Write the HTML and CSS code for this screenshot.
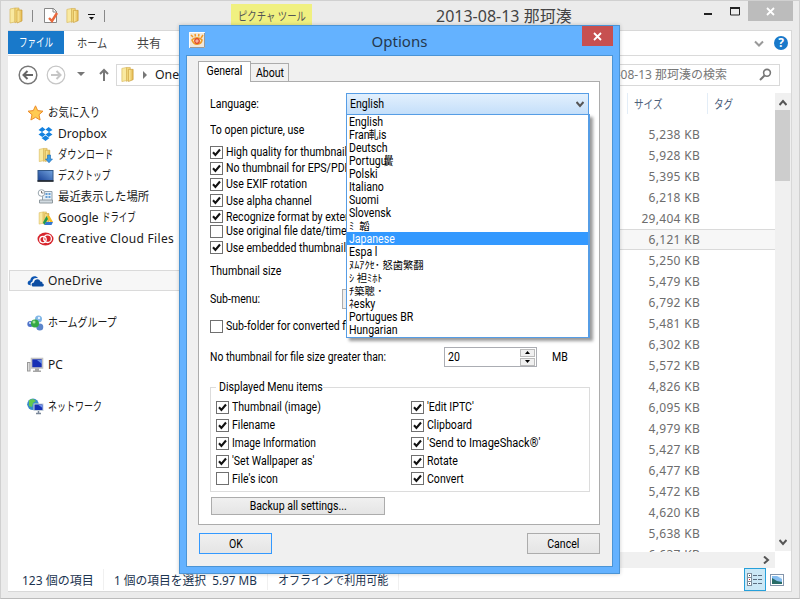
FILE: index.html
```html
<!DOCTYPE html>
<html lang="ja">
<head>
<meta charset="utf-8">
<title>Options</title>
<link rel="stylesheet" href="styles.css">
</head>
<body>
<svg width="0" height="0" class="defs">
  <defs>
    <linearGradient id="gold" x1="0" x2="1"><stop offset="0" stop-color="#fff0a8"/><stop offset="1" stop-color="#e2b64c"/></linearGradient>
    <linearGradient id="screen" x1="0" y1="1" x2="1" y2="0"><stop offset="0" stop-color="#163f94"/><stop offset="1" stop-color="#75a5df"/></linearGradient>
    <symbol id="folder" viewBox="0 0 16 17"><path d="M2 2l5-1v14l-5 1z" fill="#f9e9a0" stroke="#d9b95b" stroke-width=".7"/><path d="M7 1h4v12l-4 3z" fill="#f4da7d" stroke="#d0a849" stroke-width=".6"/><path d="M9 3h5v11l-5 2z" fill="url(#gold)" stroke="#c89c36" stroke-width=".7"/></symbol>
    <symbol id="check" viewBox="0 0 13 13"><rect x=".5" y=".5" width="12" height="12" fill="#fff" stroke="#707070"/><path d="M3 6.300l2.400 2.600L10 3.500" fill="none" stroke="#111" stroke-width="2.100"/></symbol>
    <symbol id="uncheck" viewBox="0 0 13 13"><rect x=".5" y=".5" width="12" height="12" fill="#fff" stroke="#707070"/></symbol>
  </defs>
</svg>
<div class="window">
  <header class="titlebar">
    <div class="quick">
      <svg width="16" height="17"><use href="#folder"/></svg><i></i>
      <svg class="doc" width="16" height="17" viewBox="0 0 16 17"><path d="M1.500 1.500h9l3 3v11h-12z" fill="#fff" stroke="#888"/><path d="M10 1.500v3.500h4" fill="none" stroke="#888"/><path d="M6 11l3 3 5-8" fill="none" stroke="#e9683c" stroke-width="2.400"/></svg>
      <svg class="fold2" width="15" height="17"><use href="#folder"/></svg>
      <svg class="qdrop" width="8" height="7" viewBox="0 0 8 7"><path d="M0 .5h7" stroke="#111"/><path d="M1 3h5L3.500 6z" fill="#111"/></svg><i></i>
    </div>
    <div class="tooltab"><span>ピクチャ ツール</span></div>
    <div class="wintitle">2013-08-13 那珂湊</div>
    <div class="winbtns">
      <svg width="8" height="3"><path d="M0 1h8" stroke="#222" stroke-width="2"/></svg>
      <svg class="max" width="10" height="9"><path d="M.5 1.500h9v6.500h-9z" fill="none" stroke="#222"/><path d="M0 1h10" stroke="#222" stroke-width="2"/></svg>
      <div class="close"><svg width="9" height="9" viewBox="0 0 9 9"><path d="M1 1l7 7M8 1l-7 7" stroke="#fff" stroke-width="1.800"/></svg></div>
    </div>
  </header>
  <main class="client">
    <nav class="ribbon">
      <div class="file"><span>ファイル</span></div><div class="rtab home"><span>ホーム</span></div><div class="rtab">共有</div>
      <svg class="chev" width="10" height="7" viewBox="0 0 10 7"><path d="M1 1.500l4 4 4-4" fill="none" stroke="#999" stroke-width="2"/></svg>
      <div class="help">?</div>
    </nav>
    <div class="address">
      <svg width="20" height="20" viewBox="0 0 20 20"><circle cx="10" cy="10" r="8.800" fill="none" stroke="#777" stroke-width="1.500"/><path d="M15 10H6M9.500 6L5.500 10l4 4" fill="none" stroke="#666" stroke-width="2"/></svg>
      <svg class="fwd" width="20" height="20" viewBox="0 0 20 20"><circle cx="10" cy="10" r="8.800" fill="none" stroke="#c6c6c6" stroke-width="1.200"/><path d="M5 10h9M10.500 6l4 4-4 4" fill="none" stroke="#c6c6c6" stroke-width="2"/></svg>
      <svg class="hist" width="8" height="5"><path d="M0 0h8L4 4z" fill="#777"/></svg>
      <svg class="up" width="10" height="13" viewBox="0 0 10 13"><path d="M5 13V2M1 6l4-4 4 4" fill="none" stroke="#777" stroke-width="2"/></svg>
      <div class="path"><svg width="15" height="17"><use href="#folder"/></svg><svg class="tri" width="5" height="8"><path d="M0 0l4 4-4 4z" fill="#777"/></svg><span>OneDrive</span></div>
      <div class="search"><span>2013-08-13 那珂湊の検索</span><svg width="13" height="13" viewBox="0 0 13 13"><circle cx="8" cy="4.800" r="3.400" fill="none" stroke="#777" stroke-width="1.600"/><path d="M5.500 7.500L1 12" stroke="#777" stroke-width="2"/></svg></div>
    </div>
    <div class="body">
      <aside class="side">
        <div class="it"><svg width="16" height="16" viewBox="0 0 16 16"><path d="M8 .8l2.200 4.800 5.300.6-4 3.500 1.100 5.300L8 12.300 3.400 15l1.100-5.300-4-3.500 5.300-.6z" fill="#ffcb52" stroke="#ec8c2a"/></svg><span class="w-fav">お気に入り</span></div>
        <div class="it sub"><svg width="16" height="16" viewBox="0 0 16 16"><path d="M1 4l3.800-3L8 3.500 4.500 6zM8 3.500L11.200 1 15 4l-3.500 2zM1 8.500L4.500 6 8 8.500 4.800 11zM8 8.500L11.500 6 15 8.500 11.200 11zM4 12l1-.4L8 9.500l3 2.100 1 .4-4 3z" fill="#1482e0"/></svg><span>Dropbox</span></div>
        <div class="it sub"><svg width="16" height="16" viewBox="0 0 16 16"><use href="#folder" width="14" height="16"/><path d="M10 8h3v4h2l-3.500 3.800L8 12h2z" fill="#3b9ae6" stroke="#1b6bb5" stroke-width=".6"/></svg><span class="w-dl">ダウンロード</span></div>
        <div class="it sub"><svg width="16" height="16" viewBox="0 0 16 16"><rect x=".5" y="2.500" width="15" height="10.500" fill="url(#screen)" stroke="#315787"/><path d="M0 13h16" stroke="#222" stroke-width="1.500"/></svg><span class="w-desk">デスクトップ</span></div>
        <div class="it sub"><svg width="16" height="16" viewBox="0 0 16 16"><path d="M5 2.500h9.500v10H5z" fill="#e6eff5" stroke="#91a1ad"/><path d="M8 5h2m1 0h2M8 8h2m1 0h2" stroke="#3983c9" stroke-width="1.500"/><path d="M2 11h13v3H2z" fill="#d2dbe1" stroke="#8f999f"/><circle cx="4" cy="4" r="3.300" fill="#fff" stroke="#9aa6ae"/><path d="M4 2v2h2" fill="none" stroke="#777"/></svg><span class="w-rec">最近表示した場所</span></div>
        <div class="it sub"><svg width="16" height="16" viewBox="0 0 16 16"><use href="#folder" width="13" height="16"/><path d="M9 6h3l3.500 6h-3z" fill="#f4be29"/><path d="M9 6l1.500 3L7 15l-1.500-2.500z" fill="#20994b"/><path d="M8.500 12h7L14 15H7z" fill="#3276d2"/></svg><span class="g">Google <span class="w-drive">ドライブ</span></span></div>
        <div class="it sub"><svg width="17" height="14" viewBox="0 0 17 14"><ellipse cx="8.500" cy="7" rx="8" ry="6.500" fill="#d7242c"/><circle cx="6" cy="7.600" r="3.200" fill="none" stroke="#fff" stroke-width="1.300"/><circle cx="10.600" cy="6.700" r="3.800" fill="none" stroke="#fff" stroke-width="1.300"/><path d="M6 7.500l3 2" stroke="#fff"/></svg><span class="cc">Creative Cloud Files</span></div>
        <div class="gap"></div>
        <div class="it active"><svg width="17" height="12" viewBox="0 0 17 12"><path d="M1 9.500C0 7 2 5.500 3.200 5.600 3.500 1 9 0 11 3.200 7 2.600 5.600 4.500 5.500 6.500 3.500 7 3 9 4 10.500z" fill="#0c55b2"/><path d="M5.500 11.500c-2-2-.4-4.200 1.500-4.100.3-3.600 5.400-4.400 6.300-1 2-.2 2.500 1.600 2 2.200C17.500 9 17 11 15.800 11.500z" fill="#0c4da2"/></svg><span>OneDrive</span></div>
        <div class="gap"></div>
        <div class="it"><svg width="17" height="16" viewBox="0 0 17 16"><circle cx="11.500" cy="4" r="3.500" fill="#80b6e7"/><circle cx="3.300" cy="9" r="3" fill="#4f73c9"/><circle cx="12.800" cy="12" r="3.500" fill="#5c85cb"/><circle cx="8" cy="8.500" r="4" fill="#35a944"/><circle cx="7" cy="7" r="1.500" fill="#a3e497"/><circle cx="12" cy="3" r="1.200" fill="#e4f3ff"/><circle cx="3" cy="8" r="1" fill="#d4e7ff"/></svg><span class="w-home">ホームグループ</span></div>
        <div class="gap"></div>
        <div class="it"><svg width="17" height="16" viewBox="0 0 17 16"><rect x=".5" y="5.500" width="2.500" height="8.500" fill="#ddd" stroke="#999"/><rect x="4.500" y="1.500" width="11" height="9.500" fill="#1730b5" stroke="#c3c3c3" stroke-width="1.600"/><path d="M10 3h5v4z" fill="#668ce5"/><path d="M8 11.500h4v2h2V15H6v-1.500h2z" fill="#a6a6a6"/></svg><span class="pc">PC</span></div>
        <div class="gap"></div>
        <div class="it"><svg width="17" height="17" viewBox="0 0 17 17"><circle cx="6" cy="6.300" r="5.800" fill="#388bc9"/><path d="M2 2l4-1 3 2-3 2-1 4-3-1zM8 5l3 1-2 5z" fill="#65c94d"/><rect x="7" y="6" width="9" height="6.500" fill="#1730b5" stroke="#c5d0dc"/><path d="M11.500 7h4v3z" fill="#7495ea"/><path d="M9 15.500h5M11.500 13v2" stroke="#7a8799" stroke-width="1.500"/></svg><span class="w-net">ネットワーク</span></div>
      </aside>
      <section class="files">
        <div class="head"><div class="c1"><span>サイズ</span></div><div class="c2"><span>タグ</span></div></div>
        <div class="rows">
          <p>5,238 KB</p><p>5,928 KB</p><p>5,395 KB</p><p>6,218 KB</p><p>29,404 KB</p><p class="sel">6,121 KB</p><p>5,250 KB</p><p>5,479 KB</p><p>6,792 KB</p><p>5,481 KB</p><p>6,302 KB</p><p>5,572 KB</p><p>4,826 KB</p><p>6,095 KB</p><p>4,979 KB</p><p>5,427 KB</p><p>6,477 KB</p><p>5,472 KB</p><p>4,620 KB</p><p>5,638 KB</p><p>6,637 KB</p>
        </div>
        <div class="hscroll"><svg width="7" height="8" viewBox="0 0 7 8"><path d="M1 .5L5 4 1 7.500" fill="none" stroke="#555" stroke-width="2"/></svg></div>
      </section>
      <div class="vscroll"><svg width="8" height="7" viewBox="0 0 8 7"><path d="M.5 6L4 2l3.500 4" fill="none" stroke="#555" stroke-width="2"/></svg><div class="thumb"></div><svg class="dn" width="8" height="7" viewBox="0 0 8 7"><path d="M.5 1L4 5l3.500-4" fill="none" stroke="#555" stroke-width="2"/></svg></div>
    </div>
    <footer class="status">
      <div class="s1"><span>123 個の項目</span></div><div class="s2"><span>1 個の項目を選択&nbsp; 5.97 MB</span></div><div class="s3"><span>オフラインで利用可能</span></div>
      <div class="view"><svg width="16" height="14" viewBox="0 0 16 14"><g fill="#fff" stroke="#7d8c9a"><rect x=".5" y=".5" width="4" height="4"/><rect x=".5" y="4.500" width="4" height="4"/><rect x=".5" y="8.500" width="4" height="4"/></g><path d="M2 2.500h1M2 10.500h1" stroke="#345"/><path d="M2 6.500h1" stroke="#c22"/><path d="M6 2.500h4m1 0h4M6 6.500h4m1 0h4M6 10.500h4m1 0h4" stroke="#5b6d80"/></svg></div>
      <svg class="pic" width="14" height="12" viewBox="0 0 14 12"><rect x=".5" y=".5" width="13" height="11" fill="#fff" stroke="#8495ab"/><path d="M2 2h10v8H2z" fill="#85bdf0"/><path d="M2 4l5 3 5 1v2H2z" fill="#276c67"/><path d="M7 2h5v3z" fill="#e5f4ff"/></svg>
    </footer>
  </main>
</div>

<div class="dialog">
  <div class="dtitle">
    <svg class="dicon" width="16" height="16" viewBox="0 0 16 16"><path d="M0 0h16v16H0z" fill="#f0e8dc"/><path d="M.5 15.500V.5h15" stroke="#fff" fill="none"/><path d="M1 15.500h14.500V1" stroke="#999" fill="none"/><path d="M3 8c2-3 8-3 10 0-1 5-8 6-10 0z" fill="#fff2c5" stroke="#f09b28" stroke-width="1.600"/><path d="M2 3l2 2M6 2l.5 2.500M10 2l-.5 2.500M14 3l-2 3" stroke="#f59a25" stroke-width="1.500"/><circle cx="8" cy="9" r="2.300" fill="#f6b09b" stroke="#df4328" stroke-width="1.200"/></svg>
    <h1>Options</h1>
    <div class="dclose"><svg width="9" height="9" viewBox="0 0 9 9"><path d="M1 1l7 7M8 1l-7 7" stroke="#fff" stroke-width="1.800"/></svg></div>
  </div>
  <div class="dbody">
    <div class="tabs"><div class="on"><span>General</span></div><div class="off"><span>About</span></div></div>
    <div class="panel">
      <div class="row lang"><div class="lang-label"><span>Language:</span></div>
        <div class="combo"><span>English</span><svg width="8" height="7" viewBox="0 0 8 7"><path d="M.5 1L4 5l3.500-4" fill="none" stroke="#555" stroke-width="2"/></svg>
          <ul class="list"><li><span>English</span></li><li><span>Fran<b class="k1">軋</b>is</span></li><li><span>Deutsch</span></li><li><span>Portugu<b class="k2">黌</b></span></li><li><span>Polski</span></li><li><span>Italiano</span></li><li><span>Suomi</span></li><li><span>Slovensk</span></li><li class="j">ﾐ&nbsp; 韜</li><li class="hot"><span>Japanese</span></li><li><span>Espa l</span></li><li class="j">ﾇﾑｱｸｾ･ 怒歯繁翻</li><li class="j">ｼ 袒ﾐﾎﾄ</li><li class="j">ﾁ築聰 ･</li><li><span><b>ﾈ</b>esky</span></li><li><span>Portugues BR</span></li><li><span>Hungarian</span></li></ul>
        </div>
      </div>
      <div class="row open"><span>To open picture, use</span></div>
      <div class="row h16"><svg><use href="#check"/></svg><span>High quality for thumbnails</span></div>
      <div class="row h16"><svg><use href="#check"/></svg><span>No thumbnail for EPS/PDF</span></div>
      <div class="row h16"><svg><use href="#check"/></svg><span>Use EXIF rotation</span></div>
      <div class="row h17"><svg><use href="#check"/></svg><span>Use alpha channel</span></div>
      <div class="row h15"><svg><use href="#check"/></svg><span>Recognize format by extension</span></div>
      <div class="row h14"><svg><use href="#uncheck"/></svg><span>Use original file date/time</span></div>
      <div class="row h19"><svg><use href="#check"/></svg><span>Use embedded thumbnail</span></div>
      <div class="row size"><span>Thumbnail size</span></div>
      <div class="row submenu"><div class="sub-label"><span>Sub-menu:</span></div><div class="hiddenbox"></div></div>
      <div class="row conv"><svg><use href="#uncheck"/></svg><span>Sub-folder for converted files</span></div>
      <div class="row limit"><div class="lbl"><span>No thumbnail for file size greater than:</span></div>
        <div class="spin"><span>20</span><div class="arrows"><i><svg width="5" height="3"><path d="M0 3h5L2.500 0z"/></svg></i><i><svg width="5" height="3"><path d="M0 0h5L2.500 3z"/></svg></i></div></div><span>MB</span></div>
      <fieldset><legend><span>Displayed Menu items</span></legend>
        <div class="col">
          <div class="row"><svg><use href="#check"/></svg><span>Thumbnail (image)</span></div>
          <div class="row"><svg><use href="#check"/></svg><span>Filename</span></div>
          <div class="row"><svg><use href="#check"/></svg><span class="tight">Image Information</span></div>
          <div class="row"><svg><use href="#check"/></svg><span>'Set Wallpaper as'</span></div>
          <div class="row last"><svg><use href="#uncheck"/></svg><span>File's icon</span></div>
        </div>
        <div class="col">
          <div class="row"><svg><use href="#check"/></svg><span>'Edit IPTC'</span></div>
          <div class="row"><svg><use href="#check"/></svg><span>Clipboard</span></div>
          <div class="row"><svg><use href="#check"/></svg><span class="loose">'Send to ImageShack®'</span></div>
          <div class="row"><svg><use href="#check"/></svg><span>Rotate</span></div>
          <div class="row last"><svg><use href="#check"/></svg><span>Convert</span></div>
        </div>
      </fieldset>
      <div class="btn backup"><span>Backup all settings...</span></div>
    </div>
    <div class="actions"><div class="btn ok"><span>OK</span></div><div class="btn"><span>Cancel</span></div></div>
  </div>
</div>
<svg class="cursor" width="14" height="21" viewBox="0 0 14 21"><path d="M.7 1v15.500l3.600-3.300 2.700 6 2.600-1.200-2.600-5.700h5z" fill="#fff" stroke="#223" stroke-width="1"/></svg>
</body>
</html>
```
FILE: styles.css
```css
* { box-sizing: border-box; }
body { margin: 0; width: 800px; height: 599px; overflow: hidden; position: relative; background: #ebebeb; font: 12px/21px "Noto Sans", "Noto Sans CJK JP", sans-serif; color: #1a1a1a; }
.defs { position: absolute; }
svg { flex: none; display: block; }
p, h1, ul, fieldset { margin: 0; padding: 0; }
span { white-space: nowrap; }
.window { width: 800px; height: 599px; border: 1px solid #d0d0d0; border-bottom-color: #bbb; padding: 0 7px 6px; display: flex; flex-direction: column; }

.titlebar { height: 29px; flex: none; display: flex; align-items: flex-start; }
.quick { display: flex; flex: none; align-items: center; width: 223px; height: 29px; }
.quick i { width: 1px; height: 12px; background: #888; margin-left: 8px; }
.quick .doc { margin-left: 10px; }
.quick .fold2 { margin-left: 6px; }
.quick .qdrop { margin-left: 8px; margin-top: 4px; }
.tooltab { flex: none; width: 81px; height: 22px; margin-top: 3px; padding-left: 7px; background: #f0f080; color: #555; line-height: 26px; }
.tooltab span { display: inline-block; transform: scaleX(.78); transform-origin: 0 0; }
.wintitle { margin-left: 124px; flex: none; font-size: 16px; line-height: 30px; color: #444; white-space: nowrap; }
.winbtns { display: flex; height: 20px; flex: none; padding-top: 12px; margin: 0 -1px 0 auto; }
.winbtns .max { margin: -6px 8px 0 18px; }
.winbtns .close { width: 45px; height: 20px; margin-top: -12px; background: #bcbcbc; display: grid; place-items: center; }

.client { flex: 1; min-height: 0; background: #fff; border: 1px solid #d8d8d8; border-left-width: 0; display: flex; flex-direction: column; }
.ribbon { height: 25px; flex: none; display: flex; align-items: center; border-bottom: 1px solid #dadada; line-height: 25px; }
.file { width: 56px; height: 23px; align-self: flex-start; background: #1979ca; color: #fff; padding-left: 11px; line-height: 24px; }
.file span { display: inline-block; transform: scaleX(.71); transform-origin: 0 0; }
.rtab { color: #444; font-size: 12px; }
.home { margin-left: 13px; width: 60px; }
.home span { display: inline-block; transform: scaleX(.85); transform-origin: 0 0; }
.chev { margin-left: auto; }
.help { width: 14px; height: 14px; border-radius: 50%; background: #1979ca; color: #fff; font-weight: bold; line-height: 14px; text-align: center; margin: 0 3px 0 10px; }
.address { height: 37px; flex: none; display: flex; align-items: center; padding-left: 10px; }
.address .fwd { margin-left: 8px; }
.address .hist { margin-left: 11px; }
.address .up { margin-left: 14px; }
.path { flex: 0 0 400px; height: 22px; margin-left: 7px; border: 1px solid #d9d9d9; display: flex; align-items: center; padding-left: 3px; line-height: 19px; font-size: 12.300px; }
.path .tri { margin: 0 7px 0 8px; }
.search { flex: none; width: 192px; margin: 0 0 0 72px; height: 22px; border: 1px solid #d9d9d9; display: flex; align-items: center; justify-content: flex-end; color: #777; line-height: 19px; }
.search svg { margin: 0 7px 0 32px; }
.body { flex: 1; min-height: 0; display: flex; }

.side { width: 172px; padding: 9px 0 0 1px; flex: none; }
.it { height: 21px; display: flex; align-items: center; padding-left: 18px; gap: 4px; line-height: 20px; margin-right: -20px; }
.it svg { width: 17px; }
.it span { transform-origin: 0 50%; }
.it .cc { letter-spacing: .3px; }
.it.sub { padding-left: 28px; }
.it.active { border: 1px solid #dadada; background: #f7f7f7; padding-left: 17px; line-height: 19px; letter-spacing: .15px; }
.gap { height: 21px; }
.w-fav { transform: scaleX(.87); }
.w-dl { transform: scaleX(.77); }
.w-desk { transform: scaleX(.73); }
.w-rec { transform: scaleX(.95); }
.w-drive { display: inline-block; transform: scaleX(.7); }
.w-home { transform: scaleX(.83); }
.w-net { transform: scaleX(.75); }

.files { flex: 1; min-width: 0; display: flex; flex-direction: column; }
.head { height: 31px; flex: none; display: flex; padding-left: 447px; line-height: 24px; color: #4c607a; }
.head div { height: 21px; border-left: 1px solid #e3edf7; padding-left: 6px; }
.head span { display: inline-block; transform: scaleX(.8); transform-origin: 0 0; }
.c1 { width: 80px; }
.rows { flex: 1; min-height: 0; overflow: hidden; color: #6d6d6d; }
.rows p { height: 21px; padding-right: 75px; text-align: right; line-height: 21px; letter-spacing: .3px; }
.rows .sel { border: 1px solid #dadada; border-right: 0; background: #f7f7f7; line-height: 19px; }
.hscroll { height: 16px; flex: none; background: #f0f0f0; display: flex; align-items: center; justify-content: flex-end; padding-right: 5px; }
.vscroll { width: 16px; height: 458px; background: #f0f0f0; display: flex; flex-direction: column; align-items: center; padding-top: 6px; }
.thumb { width: 15px; height: 71px; margin: 4px 1px 0 0; background: #cdcdcd; }
.dn { margin: auto 0 5px; }
.status { height: 23px; flex: none; display: flex; align-items: center; color: #1c3450; }
.status > div:not(.view) { height: 21px; border-right: 1px solid #f0f0f0; line-height: 23px; }
.status span { display: inline-block; transform-origin: 0 0; }
.s1 { width: 96px; padding-left: 14px; }
.s2 { width: 164px; padding-left: 10px; }
.s2 span { transform: scaleX(.98); }
.s3 { width: 131px; padding-left: 10px; }
.s3 span { transform: scaleX(.92); }
.view { width: 22px; height: 23px; margin-left: auto; background: #cbe8f6; border: 1px solid #26a0da; display: grid; place-items: center; }
.pic { margin: 0 7px 0 4px; }

.dialog { position: absolute; left: 179px; top: 25px; width: 441px; height: 549px; background: #64b2ff; border: 1px solid #4b94d5; padding: 0 6px 6px; display: flex; flex-direction: column; box-shadow: 0 0 4px rgba(0,0,0,.2); font: 12px/14px Roboto, "Noto Sans CJK JP", sans-serif; color: #000; }
.dialog span { display: inline-block; transform: scaleX(.88); transform-origin: 0 50%; }
.dialog .tight { transform: scaleX(.85); }
.dialog .loose { transform: scaleX(.92); }
.dtitle { height: 29px; flex: none; display: flex; align-items: flex-start; }
.dicon { margin: 6px 0 0 3px; }
h1 { flex: 1; text-align: center; font: 15px/31px "Noto Sans", sans-serif; color: #24384e; padding-left: 12px; }
.dclose { width: 31px; height: 20px; background: #c75050; display: grid; place-items: center; }
.dbody { flex: 1; border: 1px solid #4b94d5; background: #f0f0f0; padding: 5px 12px 11px 11px; display: flex; flex-direction: column; }
.tabs { height: 20px; display: flex; align-items: flex-end; }
.tabs div { border: 1px solid #acacac; border-bottom: 0; text-align: center; }
.dialog .tabs span, .dialog .btn span { transform-origin: 50% 50%; }
.on { width: 53px; height: 21px; margin-bottom: -1px; background: #fff; z-index: 1; line-height: 19px; }
.off { width: 39px; height: 18px; margin-left: -1px; line-height: 19px; background: #f1f1f1; }
.panel { width: 402px; height: 444px; flex: none; border: 1px solid #acacac; background: #fff; padding: 11px 9px 0 11px; }
.row { display: flex; align-items: center; }
.row > svg { width: 13px; height: 13px; margin-right: 3px; }
.lang { height: 22px; }
.lang-label { width: 136px; }
.combo { position: relative; width: 243px; height: 22px; border: 1px solid #569de5; background: linear-gradient(#e2f0fd, #c4dffa); display: flex; align-items: center; justify-content: space-between; padding: 0 4px 0 3px; }
.list { position: absolute; z-index: 2; left: -1px; top: 20px; width: 244px; height: 224px; list-style: none; border: 1px solid #569de5; border-right-width: 2px; background: #fff; box-shadow: 3px 3px 3px rgba(0,0,0,.4); }
.list li { height: 13px; line-height: 15px; padding-left: 2px; white-space: pre; }
.list b { font-weight: 400; font-size: 11px; line-height: 10px; }
.list .k1 { margin-left: -1px; }
.list .k2 { margin-left: -3px; }
.list .j { font-size: 10.300px; }
.list .hot { background: #3399ff; color: #fff; }
.open { height: 29px; }
.h16 { height: 16px; }
.h17 { height: 17px; }
.h15 { height: 15px; }
.h14 { height: 14px; }
.h19 { height: 19px; }
.size { height: 27px; }
.submenu { height: 29px; }
.sub-label { width: 132px; }
.hiddenbox { width: 20px; height: 20px; border: 1px solid #acacac; background: #eee; }
.conv { height: 26px; }
.limit { height: 36px; margin-bottom: 5px; }
.lbl { width: 234px; }
.dialog .lbl span { transform: scaleX(.865); }
.spin { width: 93px; height: 20px; border: 1px solid #abadb3; display: flex; justify-content: space-between; align-items: center; padding: 0 1px 0 3px; margin-right: 15px; }
.arrows { display: grid; grid-template-rows: 8px 8px; gap: 1px; width: 15px; }
.arrows i { border: 1px solid #bbb; background: #f0f0f0; display: grid; place-items: center; }
fieldset { height: 112px; border: 1px solid #dcdcdc; display: flex; padding: 4px 0 0 5px; min-width: 0; }
legend { padding: 0 0 0 3px; width: 107px; height: 14px; line-height: 14px; }
fieldset .row { height: 18px; }
fieldset .last { height: 17px; }
fieldset .row > svg { margin-right: 3px; }
.col { width: 195px; flex: none; }
.col + .col { width: 170px; }
.btn { border: 1px solid #acacac; background: linear-gradient(#f0f0f0, #e5e5e5); width: 73px; height: 21px; line-height: 20px; text-align: center; }
.backup { width: 174px; height: 18px; line-height: 17px; margin: 5px 0 0 1px; }
.actions { display: flex; justify-content: space-between; margin: 8px 0 0 1px; }
.ok { border-color: #3399ff; }
.cursor { position: absolute; left: 522px; top: 236px; }
```
